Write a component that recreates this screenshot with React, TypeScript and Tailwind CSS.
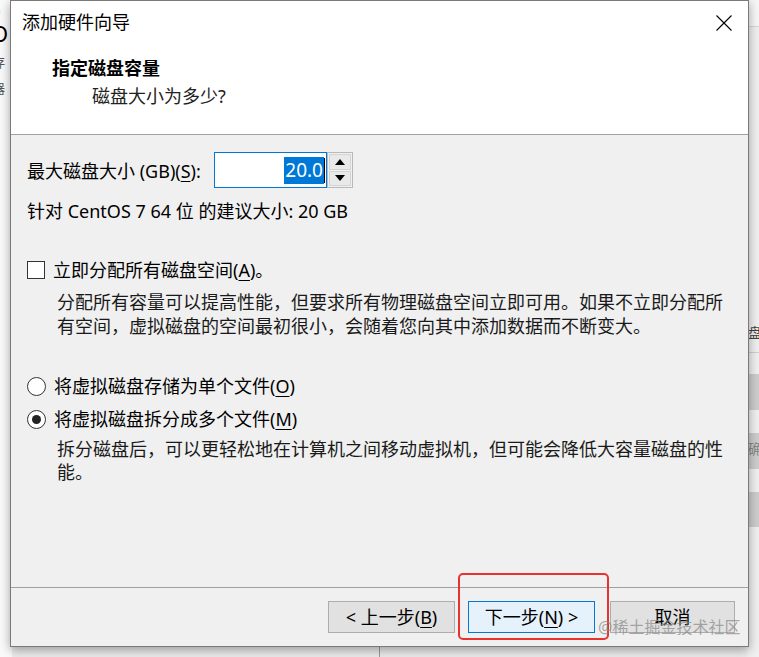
import React from 'react';

const Mn = ({ children }: { children: React.ReactNode }) => (
  <span className="underline decoration-1 underline-offset-[3px]">{children}</span>
);

const Checkbox = () => <div className="w-[18px] h-[18px] shrink-0 border border-[#333] bg-white" />;

const Radio = ({ checked }: { checked?: boolean }) => (
  <div className="w-[19px] h-[19px] shrink-0 rounded-full border border-[#333] bg-white flex items-center justify-center">
    {checked && <div className="w-[9px] h-[9px] rounded-full bg-[#222]" />}
  </div>
);

const App: React.FC = () => {
  return (
    <div className="relative w-[759px] h-[657px] overflow-hidden bg-[#ececec] font-['Noto_Sans','Noto_Sans_CJK_SC',sans-serif] text-black">
      {/* window behind, left edge */}
      <div className="absolute left-0 top-0 w-[12px] h-[657px] overflow-hidden bg-[#fafafa]">
        <div className="absolute -left-[6px] -top-[4px] text-[22px] leading-[26px]">)</div>
        <div className="absolute -left-[9px] top-[20px] text-[22px] leading-[26px]">O</div>
        <div className="absolute -left-[8px] top-[54px] text-[13px] leading-[16px] text-[#555]">存</div>
        <div className="absolute -left-[8px] top-[80px] text-[13px] leading-[16px] text-[#555]">器</div>
      </div>

      {/* window behind, right edge */}
      <div className="absolute right-0 top-0 w-[12px] h-[657px] overflow-hidden bg-[#f0f0f0]">
        <div className="h-[27px] bg-[#f7f7f7] border-b border-[#d8d8d8]" />
        <div className="absolute left-[1px] top-[325px] text-[14px] leading-[16px] text-[#444]">盘</div>
        <div className="absolute left-0 top-[352px] w-full border-t border-[#d0d0d0]" />
        <div className="absolute left-0 top-[374px] w-full h-[36px] bg-[#cdcdcd]" />
        <div className="absolute left-0 top-[433px] w-full h-[36px] bg-[#cdcdcd]">
          <div className="pl-[1px] pt-[8px] text-[14px] leading-[16px] text-[#888]">确</div>
        </div>
        <div className="absolute left-0 top-[492px] w-full h-[35px] bg-[#cdcdcd]" />
      </div>

      {/* window behind, bottom line */}
      <div className="absolute left-[379px] top-[646px] h-[11px] border-l border-[#9a9a9a]" />

      {/* dialog */}
      <div className="absolute left-[10px] top-0 w-[739px] h-[647px] flex flex-col border border-[#7a7a7a] bg-[#f0f0f0] shadow-[0_3px_10px_rgba(0,0,0,0.35)]">
        {/* header */}
        <div className="h-[134px] shrink-0 bg-white border-b border-[#a0a0a0]">
          <div className="h-[42px] flex items-center justify-between pl-[11px] pr-[16px]">
            <span className="text-[18px] leading-[24px]">添加硬件向导</span>
            <svg width="16" height="16" viewBox="0 0 16 16" className="mt-[1px]">
              <path d="M0.5 0.5 L15.5 15.5 M15.5 0.5 L0.5 15.5" stroke="#000" strokeWidth="1.1" fill="none" />
            </svg>
          </div>
          <div className="mt-[11px] pl-[41px] text-[18px] leading-[28px] font-bold">指定磁盘容量</div>
          <div className="pl-[81px] text-[18px] leading-[28px] text-[#222]">磁盘大小为多少?</div>
        </div>

        {/* body */}
        <div className="flex-1 pt-[17px] pl-[16px]">
          <div className="flex items-center h-[36px]">
            <div className="w-[187px] text-[18px] leading-[24px] pt-[2px] whitespace-nowrap">
              最大磁盘大小 (GB)(<Mn>S</Mn>):
            </div>
            <div className="w-[113px] h-[36px] border border-[#0078d7] bg-white flex items-center justify-end pr-[1px]">
              <span className="bg-[#0078d7] text-white text-[19px] leading-[27px] px-[1px]">20.0</span>
              <span className="w-[1px] h-[25px] bg-black" />
            </div>
            <div className="w-[26px] h-[36px] border border-[#b9b9b9] bg-[#f0f0f0] flex flex-col p-[1px] gap-[1px]">
              <div className="flex-1 border border-[#d4d4d4] bg-[#e9e9e9] flex items-center justify-center">
                <svg width="10" height="6" viewBox="0 0 10 6"><path d="M0 6 L5 0 L10 6 Z" fill="#000" /></svg>
              </div>
              <div className="flex-1 border border-[#d4d4d4] bg-[#e9e9e9] flex items-center justify-center">
                <svg width="10" height="6" viewBox="0 0 10 6"><path d="M0 0 L10 0 L5 6 Z" fill="#000" /></svg>
              </div>
            </div>
          </div>

          <div className="mt-[11px] text-[18px] leading-[24px]">针对 CentOS 7 64 位 的建议大小: 20 GB</div>

          <div className="mt-[35px] flex items-center gap-[8px] h-[24px]">
            <Checkbox />
            <span className="text-[18px] leading-[24px]">立即分配所有磁盘空间(<Mn>A</Mn>)。</span>
          </div>
          <p className="mt-[8px] ml-[30px] w-[668px] text-[18px] leading-[24px] text-[#1a1a1a]">
            分配所有容量可以提高性能，但要求所有物理磁盘空间立即可用。如果不立即分配所有空间，虚拟磁盘的空间最初很小，会随着您向其中添加数据而不断变大。
          </p>

          <div className="mt-[36px] flex items-center gap-[8px] h-[24px]">
            <Radio />
            <span className="text-[18px] leading-[24px]">将虚拟磁盘存储为单个文件(<Mn>O</Mn>)</span>
          </div>
          <div className="mt-[9px] flex items-center gap-[8px] h-[24px]">
            <Radio checked />
            <span className="text-[18px] leading-[24px]">将虚拟磁盘拆分成多个文件(<Mn>M</Mn>)</span>
          </div>
          <p className="mt-[7px] ml-[30px] w-[668px] text-[18px] leading-[23px] text-[#1a1a1a]">
            拆分磁盘后，可以更轻松地在计算机之间移动虚拟机，但可能会降低大容量磁盘的性能。
          </p>
        </div>

        {/* footer */}
        <div className="h-[59px] shrink-0 border-t border-[#a0a0a0] flex justify-end items-start pt-[13px] pr-[13px]">
          <button className="w-[127px] h-[32px] border border-[#adadad] bg-[#e1e1e1] text-[18px] leading-[24px] flex items-center justify-center">
            &lt; 上一步(<Mn>B</Mn>)
          </button>
          <button className="ml-[13px] w-[127px] h-[32px] border border-[#0078d7] bg-[#e5f1fb] text-[18px] leading-[24px] flex items-center justify-center">
            下一步(<Mn>N</Mn>) &gt;
          </button>
          <button className="ml-[15px] w-[125px] h-[32px] border border-[#adadad] bg-[#e1e1e1] text-[18px] leading-[24px] flex items-center justify-center">
            取消
          </button>
        </div>
      </div>

      {/* annotation box */}
      <div className="absolute left-[458px] top-[573px] w-[151px] h-[67px] rounded-[5px] border-2 border-[#e8322f]" />

      {/* watermark */}
      <div className="absolute left-[598px] top-[616px] text-[16px] leading-[22px] text-[rgba(140,140,140,0.75)] whitespace-nowrap">@稀土掘金技术社区</div>
    </div>
  );
};

export default App;
